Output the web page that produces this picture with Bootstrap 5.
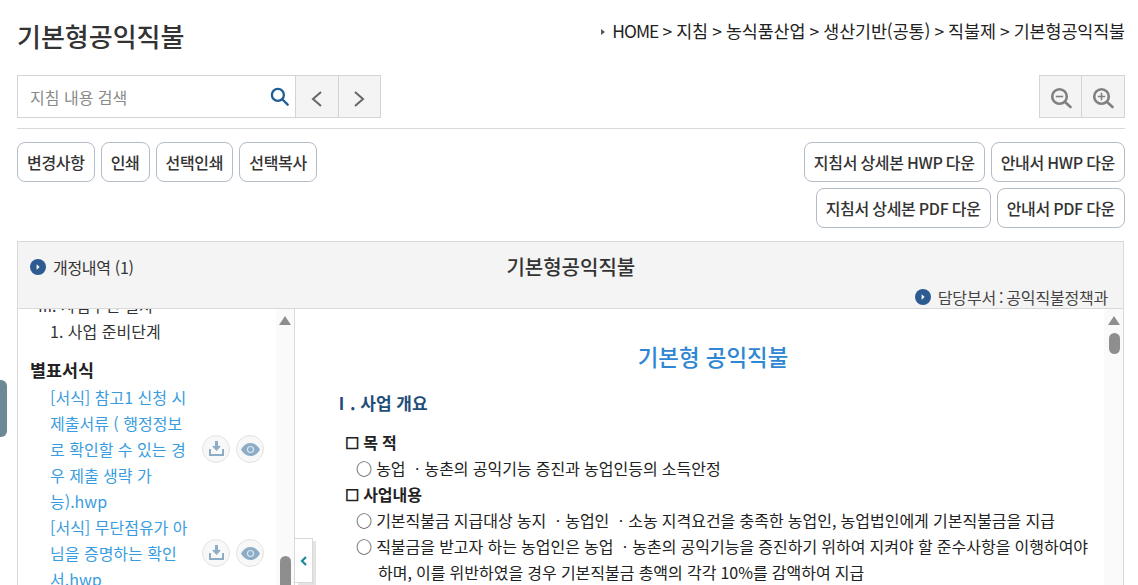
<!DOCTYPE html>
<html lang="ko">
<head>
    <meta charset="UTF-8">
    <meta name="viewport" content="width=device-width, initial-scale=1.0">
    <title>기본형공익직불</title>
    <link href="https://cdn.jsdelivr.net/npm/bootstrap@5.3.0/dist/css/bootstrap.min.css" rel="stylesheet">
    <style>
        html, body {
            height: 585px;
            overflow: hidden;
        }
        body {
            font-family: "Noto Sans CJK KR", "Noto Sans", sans-serif;
            font-size: 16px;
            color: #333;
            background: #fff;
        }
        .page-wrap {
            padding: 0 13px 0 17px;
        }
        .top-row {
            height: 75px;
        }
        .page-title {
            font-size: 26px;
            font-weight: 500;
            line-height: 38px;
            margin: 17px 0 0;
            color: #333;
        }
        .crumbs {
            font-size: 17.4px;
            line-height: 24px;
            margin-top: 19px;
            color: #222;
            letter-spacing: -0.1px;
            word-spacing: -0.6px;
        }
        .crumb-home {
            letter-spacing: -1px;
        }
        .crumb-arrow {
            display: inline-block;
            width: 0;
            height: 0;
            border-left: 4px solid #555;
            border-top: 3.5px solid transparent;
            border-bottom: 3.5px solid transparent;
            margin-right: 7px;
            vertical-align: 3px;
        }
        .tool-row {
            height: 54px;
            border-bottom: 1px solid #d9d9d9;
        }
        .search-box {
            width: 279px;
            height: 43px;
            border: 1px solid #d4d4d8;
            background: #fff;
            padding: 0 6px 0 12px;
        }
        .search-box input {
            border: 0;
            outline: 0;
            flex: 1;
            min-width: 0;
            font-size: 16px;
            color: #333;
            padding: 0;
        }
        .search-box input::placeholder {
            color: #8a8a8a;
        }
        .square-btn {
            width: 43px;
            height: 43px;
            border: 1px solid #d4d4d8;
            border-left-width: 0;
            background: #f4f4f4;
            padding: 0;
        }
        .square-btn.first-btn {
            border-left-width: 1px;
        }
        .square-btn.next-btn {
            width: 42px;
        }
        .action-row {
            padding-top: 13px;
            height: 112px;
        }
        .left-btns,
        .right-btns {
            gap: 6px;
        }
        .action-btn {
            height: 40px;
            padding: 0 9px;
            border: 1px solid #b4bcc8;
            border-radius: 8px;
            background: #fff;
            font-size: 16px;
            font-weight: 500;
            line-height: 37px;
            color: #333;
            letter-spacing: -0.3px;
            word-spacing: -0.9px;
            white-space: nowrap;
        }
        .guide-panel {
            border: 1px solid #d9d9d9;
            border-bottom: 0;
            margin-right: 1px;
            height: 344px;
            position: relative;
        }
        .panel-head {
            height: 67px;
            background: #f4f4f4;
            border-bottom: 1px solid #d9d9d9;
            padding: 0 12px;
        }
        .head-left {
            font-size: 16px;
            padding-top: 12px;
            line-height: 26px;
            letter-spacing: -0.3px;
            gap: 7px;
        }
        .head-title {
            font-size: 20px;
            font-weight: 500;
            line-height: 26px;
            padding-top: 12px;
            flex: 1;
            text-align: center;
            margin-right: 103px;
        }
        .head-dept {
            font-size: 16px;
            line-height: 22px;
            margin: 6px 3px 0 0;
            color: #444;
            letter-spacing: -0.2px;
            word-spacing: -1.2px;
            gap: 7px;
        }
        .round-mark {
            flex: none;
        }
        .panel-body-wrap {
            height: 277px;
            overflow: hidden;
        }
        .side-pane {
            width: 277px;
            height: 277px;
            flex: none;
            position: relative;
            overflow: hidden;
            border-right: 1px solid #d9d9d9;
            padding: 0 0 0 12px;
        }
        .side-inner {
            margin-top: -17px;
        }
        .side-cut {
            font-size: 16px;
            line-height: 26px;
            padding-left: 8px;
        }
        .side-item {
            font-size: 16px;
            line-height: 26px;
            padding-left: 20px;
            color: #333;
        }
        .side-group {
            font-size: 17.4px;
            font-weight: 700;
            line-height: 26px;
            margin: 13px 0 1px;
            color: #222;
        }
        .form-item {
            padding-left: 20px;
        }
        .form-link {
            width: 142px;
            flex: none;
            font-size: 16px;
            line-height: 26px;
            color: #3a9ce0;
            text-decoration: none;
        }
        .circle-btn {
            width: 28px;
            height: 28px;
            border-radius: 50%;
            border: 1px solid #e2e2e2;
            background: #f8f8f8;
            flex: none;
        }
        .circle-btns {
            margin-left: 10px;
            gap: 6px;
        }
        .fake-scroll {
            position: absolute;
            top: 0;
            right: 0;
            width: 18px;
            height: 277px;
            background: #fafafa;
        }
        .scroll-up {
            position: absolute;
            top: 7px;
            left: 3px;
            width: 0;
            height: 0;
            border-left: 6px solid transparent;
            border-right: 6px solid transparent;
            border-bottom: 9px solid #8e8e8e;
        }
        .scroll-thumb {
            position: absolute;
            left: 4px;
            width: 11px;
            background: #8e8e8e;
            border-radius: 6px;
        }
        .doc-scroll {
            width: 19px;
        }
        .doc-scroll .scroll-up {
            left: 4px;
        }
        .doc-scroll .scroll-thumb {
            left: 5px;
        }
        .doc-pane {
            flex: 1;
            position: relative;
            overflow: hidden;
            padding: 0 30px 0 38px;
        }
        .doc-title {
            font-size: 22.4px;
            font-weight: 500;
            color: #2f86d2;
            text-align: center;
            line-height: 30px;
            margin: 32px 0 0;
        }
        .doc-section {
            font-size: 17px;
            font-weight: 700;
            color: #1f4e79;
            line-height: 24px;
            margin-top: 20px;
        }
        .doc-list {
            margin: 14px 0 0 12px;
            font-size: 16px;
            line-height: 26px;
            color: #222;
            word-spacing: -0.35px;
        }
        .doc-head {
            font-weight: 700;
        }
        .doc-line {
            padding-left: 11px;
        }
        .doc-cont {
            padding-left: 33px;
        }
        .left-tab {
            position: absolute;
            left: 0;
            top: 380px;
            width: 7px;
            height: 57px;
            background: #6b8a94;
            border-radius: 0 6px 6px 0;
        }
        .collapse-tab {
            position: absolute;
            left: 0;
            top: 229px;
            width: 18px;
            height: 45px;
            background: #fff;
            border: 1px solid #d9d9d9;
            border-left: 0;
            box-shadow: 3px 3px 0 #e4e4e4;
        }
    </style>
</head>
<body>
    <div class="left-tab"></div>

    <div class="page-wrap">
        <!-- title, breadcrumb -->
        <div class="top-row d-flex justify-content-between">
            <h1 class="page-title">기본형공익직불</h1>
            <div class="crumbs"><span class="crumb-arrow"></span><span class="crumb-home">HOME</span> &gt; 지침 &gt; 농식품산업 &gt; 생산기반(공통) &gt; 직불제 &gt; 기본형공익직불</div>
        </div>

        <!-- search and zoom -->
        <div class="tool-row d-flex justify-content-between align-items-start">
            <div class="d-flex">
                <div class="search-box d-flex align-items-center">
                    <input type="text" placeholder="지침 내용 검색">
                    <svg width="19" height="19" viewBox="0 0 20 20" fill="none" stroke="#1f5f94" stroke-width="2.4"><circle cx="8.3" cy="8.3" r="6.3"/><path d="M12.9 12.9 18.6 18.6" stroke-linecap="round"/></svg>
                </div>
                <button class="square-btn" type="button"><svg width="14" height="20" viewBox="0 0 14 20" fill="none" stroke="#666" stroke-width="2"><path d="M11 3 3 10l8 7"/></svg></button>
                <button class="square-btn next-btn" type="button"><svg width="14" height="20" viewBox="0 0 14 20" fill="none" stroke="#666" stroke-width="2"><path d="M2 3l8 7-8 7"/></svg></button>
            </div>
            <div class="d-flex">
                <button class="square-btn first-btn" type="button"><svg width="22" height="22" viewBox="0 0 22 22" fill="none" stroke="#808080" stroke-width="2.6"><circle cx="9.5" cy="9.5" r="7.3"/><path d="M15 15l5.5 5" stroke-linecap="round"/><path d="M5.8 9.5h7.4" stroke-width="1.6"/></svg></button>
                <button class="square-btn" type="button"><svg width="22" height="22" viewBox="0 0 22 22" fill="none" stroke="#808080" stroke-width="2.6"><circle cx="9.5" cy="9.5" r="7.3"/><path d="M15 15l5.5 5" stroke-linecap="round"/><path d="M5.8 9.5h7.4M9.5 5.8v7.4" stroke-width="1.6"/></svg></button>
            </div>
        </div>

        <!-- buttons -->
        <div class="action-row d-flex justify-content-between">
            <div class="d-flex left-btns align-items-start">
                <button class="action-btn" type="button">변경사항</button>
                <button class="action-btn" type="button">인쇄</button>
                <button class="action-btn" type="button">선택인쇄</button>
                <button class="action-btn" type="button">선택복사</button>
            </div>
            <div class="d-flex flex-column align-items-end right-btns">
                <div class="d-flex right-btns">
                    <button class="action-btn" type="button">지침서 상세본 HWP 다운</button>
                    <button class="action-btn" type="button">안내서 HWP 다운</button>
                </div>
                <div class="d-flex right-btns">
                    <button class="action-btn" type="button">지침서 상세본 PDF 다운</button>
                    <button class="action-btn" type="button">안내서 PDF 다운</button>
                </div>
            </div>
        </div>

        <!-- guide panel -->
        <div class="guide-panel">
            <div class="panel-head">
                <div class="d-flex">
                    <div class="head-left d-flex align-items-center">
                        <svg class="round-mark" width="16" height="16" viewBox="0 0 16 16"><circle cx="8" cy="8" r="8" fill="#2c5a91"/><path d="M6.6 5.2 9.6 8l-3 2.8z" fill="#fff"/></svg>
                        <span>개정내역 (1)</span>
                    </div>
                    <div class="head-title">기본형공익직불</div>
                </div>
                <div class="d-flex justify-content-end align-items-center head-dept">
                    <svg class="round-mark" width="16" height="16" viewBox="0 0 16 16"><circle cx="8" cy="8" r="8" fill="#2c5a91"/><path d="M6.6 5.2 9.6 8l-3 2.8z" fill="#fff"/></svg>
                    <span>담당부서 : 공익직불정책과</span>
                </div>
            </div>

            <div class="panel-body-wrap d-flex">
                <div class="side-pane">
                    <div class="side-inner">
                        <div class="side-cut">III. 사업추진 절차</div>
                        <div class="side-item">1. 사업 준비단계</div>
                        <div class="side-group">별표서식</div>
                        <div class="form-item d-flex align-items-center">
                            <a class="form-link" href="#">[서식] 참고1 신청 시 제출서류 ( 행정정보로 확인할 수 있는 경우 제출 생략 가능).hwp</a>
                            <div class="d-flex circle-btns">
                                <div class="circle-btn d-flex align-items-center justify-content-center"><svg width="17" height="16" viewBox="0 0 17 16" fill="#8dacc6"><path d="M7 0h3v5h3L8.500 10 4 5h3z"/><path d="M1 8h2v5h11V8h2v7H1z"/></svg></div>
                                <div class="circle-btn d-flex align-items-center justify-content-center"><svg width="19" height="13" viewBox="0 0 19 13" fill="#8dacc6"><path d="M9.500 0C5 0 2 3 0 6.500 2 10 5 13 9.500 13S17 10 19 6.500C17 3 14 0 9.500 0z"/><circle cx="9.500" cy="6.500" r="3.600" fill="#dce6ee"/><circle cx="9.500" cy="6.500" r="2.400" fill="#8dacc6"/></svg></div>
                            </div>
                        </div>
                        <div class="form-item d-flex align-items-center">
                            <a class="form-link" href="#">[서식] 무단점유가 아님을 증명하는 확인서.hwp</a>
                            <div class="d-flex circle-btns">
                                <div class="circle-btn d-flex align-items-center justify-content-center"><svg width="17" height="16" viewBox="0 0 17 16" fill="#8dacc6"><path d="M7 0h3v5h3L8.500 10 4 5h3z"/><path d="M1 8h2v5h11V8h2v7H1z"/></svg></div>
                                <div class="circle-btn d-flex align-items-center justify-content-center"><svg width="19" height="13" viewBox="0 0 19 13" fill="#8dacc6"><path d="M9.500 0C5 0 2 3 0 6.500 2 10 5 13 9.500 13S17 10 19 6.500C17 3 14 0 9.500 0z"/><circle cx="9.500" cy="6.500" r="3.600" fill="#dce6ee"/><circle cx="9.500" cy="6.500" r="2.400" fill="#8dacc6"/></svg></div>
                            </div>
                        </div>
                    </div>
                    <div class="fake-scroll">
                        <span class="scroll-up"></span>
                        <span class="scroll-thumb" style="top: 247px; height: 40px;"></span>
                    </div>
                </div>

                <div class="doc-pane">
                    <div class="collapse-tab d-flex align-items-center justify-content-center">
                        <svg width="8" height="12" viewBox="0 0 8 12" fill="none" stroke="#1a8a9c" stroke-width="2.200"><path d="M6 2 2 6l4 4"/></svg>
                    </div>
                    <div class="doc-title">기본형 공익직불</div>
                    <div class="doc-section">Ⅰ. 사업 개요</div>
                    <div class="doc-list">
                        <div class="doc-head">☐ 목 적</div>
                        <div class="doc-line">○ 농업 ㆍ농촌의 공익기능 증진과 농업인등의 소득안정</div>
                        <div class="doc-head">☐ 사업내용</div>
                        <div class="doc-line">○ 기본직불금 지급대상 농지 ㆍ농업인 ㆍ소농 지격요건을 충족한 농업인, 농업법인에게 기본직불금을 지급</div>
                        <div class="doc-line">○ 직불금을 받고자 하는 농업인은 농업 ㆍ농촌의 공익기능을 증진하기 위하여 지켜야 할 준수사항을 이행하여야</div>
                        <div class="doc-cont">하며, 이를 위반하였을 경우 기본직불금 총액의 각각 10%를 감액하여 지급</div>
                    </div>
                    <div class="fake-scroll doc-scroll">
                        <span class="scroll-up"></span>
                        <span class="scroll-thumb" style="top: 24px; height: 21px;"></span>
                    </div>
                </div>
            </div>
        </div>
    </div>

    <script src="https://cdn.jsdelivr.net/npm/bootstrap@5.3.0/dist/js/bootstrap.bundle.min.js"></script>
</body>
</html>
